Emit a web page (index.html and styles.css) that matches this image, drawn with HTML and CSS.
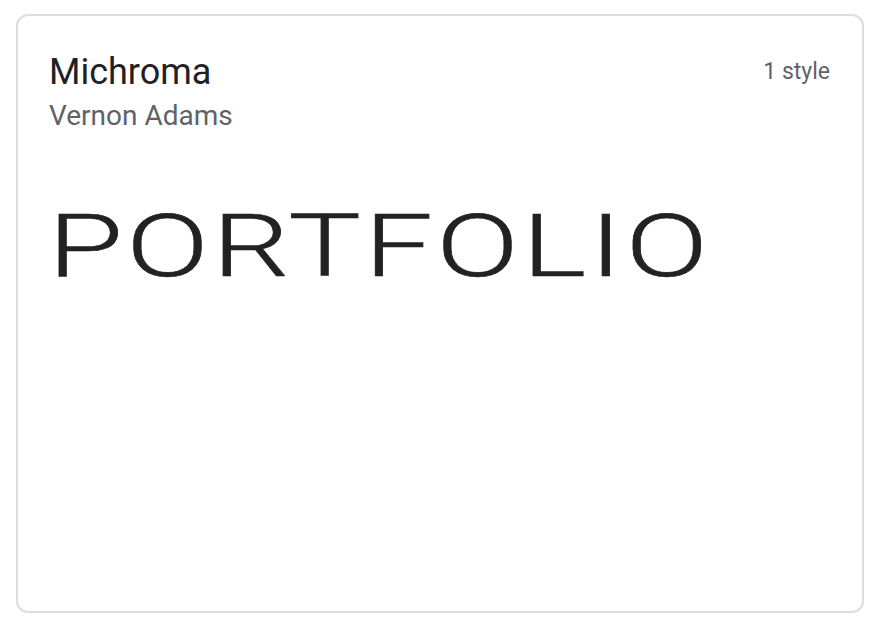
FILE: index.html
```html
<!DOCTYPE html>
<html>
<head>
<meta charset="utf-8">
<link rel="stylesheet" href="styles.css">
</head>
<body>
<div class="card">
  <div class="head">
    <div class="names">
      <div class="family">Michroma</div>
      <div class="author">Vernon Adams</div>
    </div>
    <div class="styles">1 style</div>
  </div>
  <div class="specimen">PORTFOLIO</div>
</div>
</body>
</html>
```

FILE: styles.css
```css
html, body {
  margin: 0;
  padding: 0;
  background: #ffffff;
}
body {
  padding: 14px 0 0 16px;
  font-family: Roboto, "Noto Sans", sans-serif;
}
.card {
  box-sizing: border-box;
  width: 848px;
  height: 599px;
  border: 2px solid #dcdce0;
  border-radius: 12px;
  padding: 34px 32px 0 31px;
  overflow: hidden;
}
.head {
  display: flex;
  justify-content: space-between;
  align-items: flex-start;
}
.family {
  font-size: 36px;
  line-height: 44px;
  color: #202124;
}
.author {
  margin-top: 4px;
  font-size: 28px;
  line-height: 36px;
  color: #5f6368;
}
.styles {
  font-size: 23px;
  line-height: 44px;
  color: #5f6368;
}
.specimen {
  margin-top: 62px;
  margin-left: -1px;
  font-family: Roboto, sans-serif;
  font-weight: 300;
  font-size: 87px;
  line-height: 100px;
  letter-spacing: 2.4px;
  color: #222222;
  white-space: nowrap;
  transform: scaleX(1.4);
  transform-origin: left center;
  -webkit-text-stroke: 0.6px #222222;
}
```
